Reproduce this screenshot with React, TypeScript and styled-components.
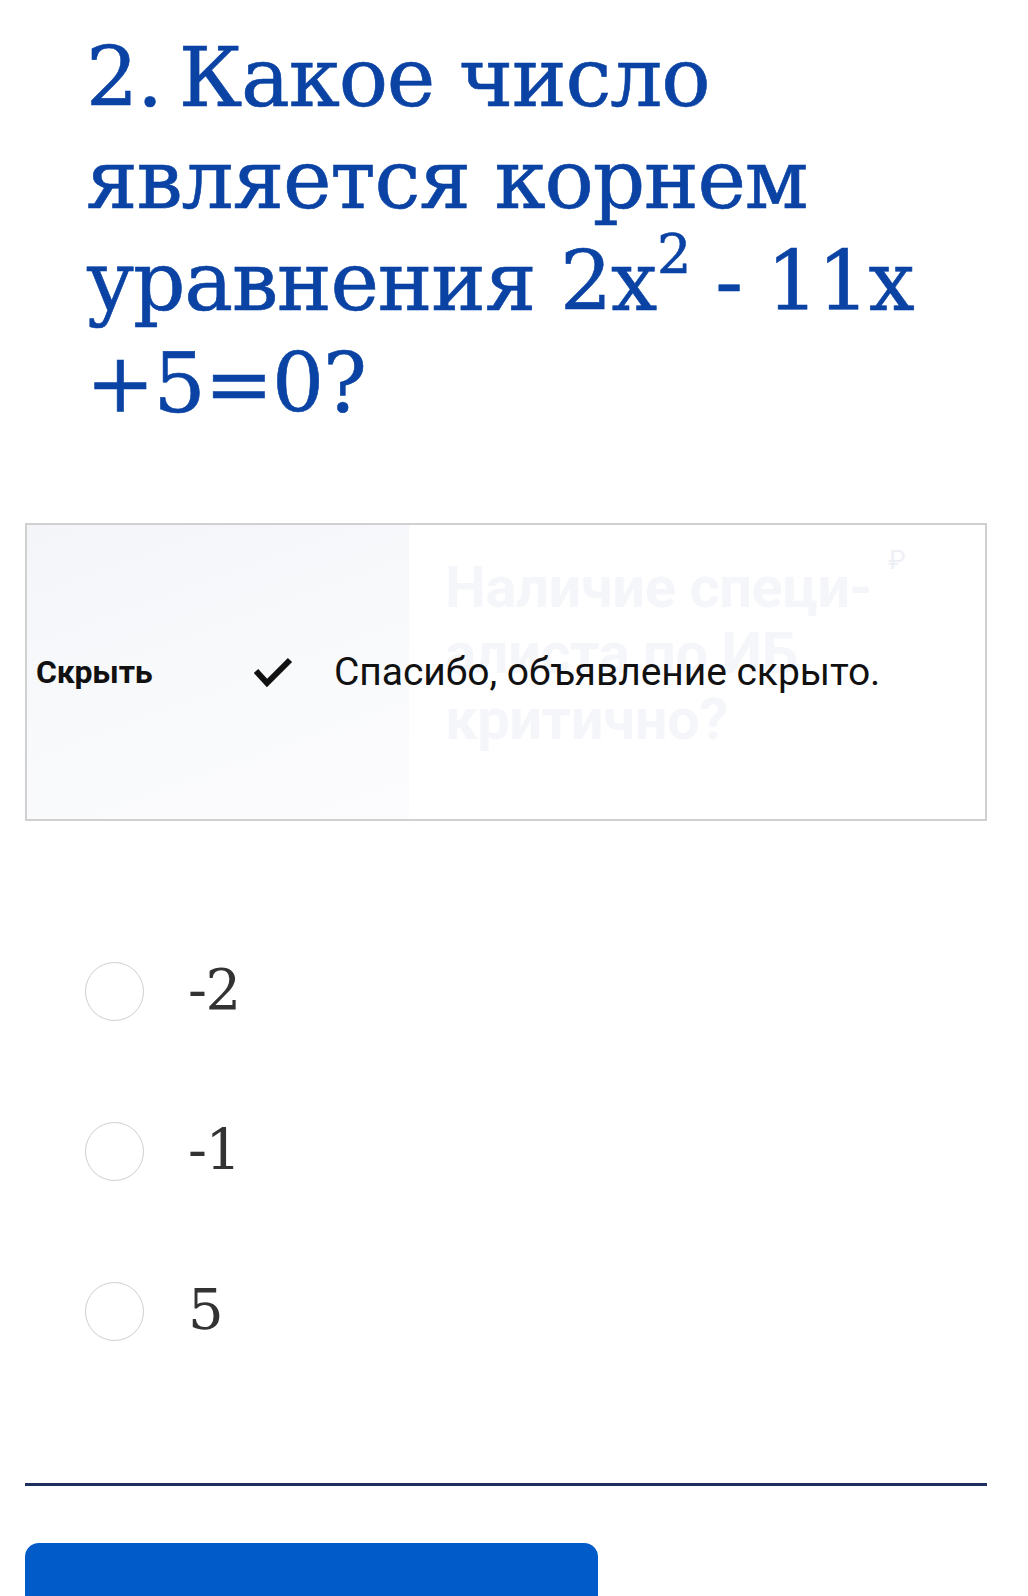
import React from "react";
import styled, { createGlobalStyle } from "styled-components";

const Global = createGlobalStyle`
  html, body { margin: 0; padding: 0; background: #ffffff; }
  body { overflow: hidden; }
`;

const Page = styled.main`
  width: 962px;
  margin-left: 25px;
  display: flex;
  flex-direction: column;
`;

const Question = styled.h2`
  margin: 0;
  padding: 27px 30px 0 61px;
  font-family: "DejaVu Serif", "Liberation Serif", serif;
  font-weight: 400;
  font-size: 82px;
  line-height: 102px;
  color: #0a43a4;
  letter-spacing: -1.2px;
  -webkit-text-stroke: 0.6px #0a43a4;
`;

const QuestionNumber = styled.span`
  word-spacing: -8px;
`;

const Sup = styled.sup`
  font-size: 0.66em;
  line-height: 0;
  vertical-align: 0.68em;
  margin-left: 1px;
`;

const AdBox = styled.section`
  position: relative;
  margin-top: 88px;
  height: 294px;
  border: 2px solid #d0d0d0;
  display: grid;
  grid-template-columns: 382px 1fr;
  overflow: hidden;
`;

const AdImage = styled.div`
  background: linear-gradient(160deg, #f3f5f9 0%, #f8f9fb 45%, #fcfcfe 100%);
`;

const AdText = styled.div`
  position: relative;
  padding: 29px 0 0 36px;
  font-family: Roboto, "Liberation Sans", sans-serif;
  font-weight: 700;
  font-size: 58px;
  line-height: 66px;
  color: #f5f6fa;
  letter-spacing: -0.5px;
`;

const Ruble = styled.span`
  position: absolute;
  top: 2px;
  right: 80px;
  font-size: 26px;
  font-weight: 400;
  color: #eef0f5;
`;

const Overlay = styled.div`
  position: absolute;
  inset: 0;
  display: flex;
  align-items: center;
  padding-left: 9px;
  font-family: Roboto, "Liberation Sans", sans-serif;
  color: #111;
`;

const HideLabel = styled.span`
  font-weight: 700;
  font-size: 32px;
  width: 217px;
  letter-spacing: -0.2px;
`;

const Check = styled.svg`
  width: 40px;
  height: 32px;
  margin-right: 41px;
  flex: none;
`;

const Message = styled.span`
  font-size: 39px;
  font-weight: 400;
  letter-spacing: -0.05px;
`;

const Options = styled.ul`
  list-style: none;
  margin: 141px 0 0;
  padding: 0 0 0 60px;
  display: flex;
  flex-direction: column;
  gap: 101px;
`;

const Option = styled.li`
  display: flex;
  align-items: center;
  gap: 44px;
  height: 59px;
`;

const Radio = styled.span`
  width: 57px;
  height: 57px;
  border-radius: 50%;
  border: 1px solid #cfcfcf;
  flex: none;
`;

const OptionLabel = styled.span`
  font-family: "DejaVu Serif", "Liberation Serif", serif;
  font-size: 56px;
  color: #333333;
  letter-spacing: -1.5px;
  margin-top: -4px;
`;

const Divider = styled.hr`
  margin: 142px 0 0;
  border: none;
  height: 3px;
  background: #1d2f5e;
`;

const SubmitButton = styled.button`
  margin-top: 57px;
  width: 573px;
  height: 110px;
  border: none;
  border-radius: 14px;
  background: #015bc8;
`;

const answers = ["-2", "-1", "5"];

export default function App() {
  return (
    <>
      <Global />
      <Page>
        <Question>
          <QuestionNumber>2. </QuestionNumber>Какое число является корнем уравнения 2x<Sup>2</Sup> - 11x +5=0?
        </Question>
        <AdBox>
          <AdImage />
          <AdText>
            <Ruble>₽</Ruble>
            Наличие специ-
            <br />
            алиста по ИБ
            <br />
            критично?
          </AdText>
          <Overlay>
            <HideLabel>Скрыть</HideLabel>
            <Check viewBox="0 0 40 32">
              <path d="M3 15 L14 27 L37 4" fill="none" stroke="#111" strokeWidth="6" />
            </Check>
            <Message>Спасибо, объявление скрыто.</Message>
          </Overlay>
        </AdBox>
        <Options>
          {answers.map((a) => (
            <Option key={a}>
              <Radio />
              <OptionLabel>{a}</OptionLabel>
            </Option>
          ))}
        </Options>
        <Divider />
        <SubmitButton aria-label="Ответить" />
      </Page>
    </>
  );
}
